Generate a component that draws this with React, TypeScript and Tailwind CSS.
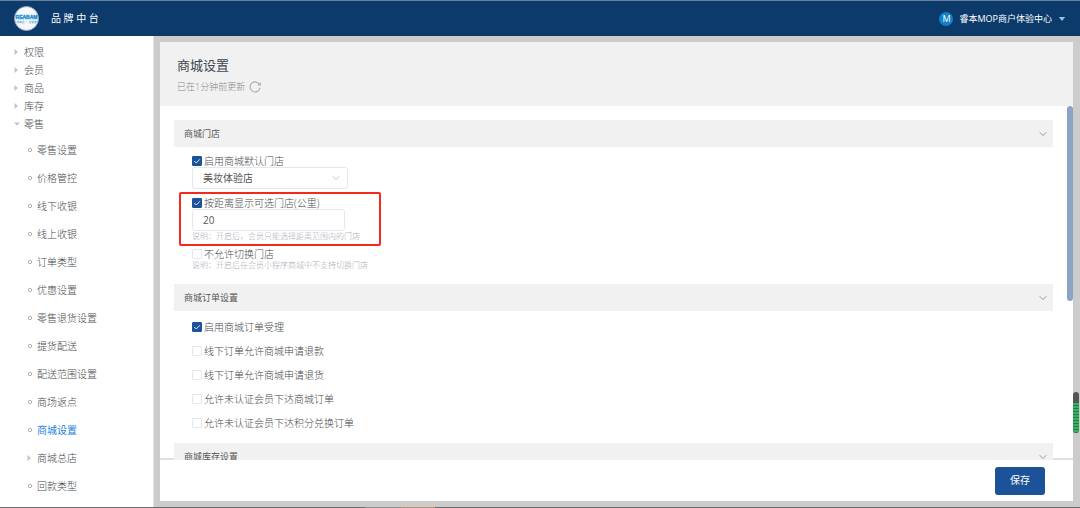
import React, { useState } from "react";

const topMenus = ["权限", "会员", "商品", "库存"];
const retailMenus = [
  "零售设置",
  "价格管控",
  "线下收银",
  "线上收银",
  "订单类型",
  "优惠设置",
  "零售退货设置",
  "提货配送",
  "配送范围设置",
  "商场返点",
  "商城设置",
  "商城总店",
  "回款类型",
];
const orderOptions = [
  { label: "启用商城订单受理", on: true },
  { label: "线下订单允许商城申请退款", on: false },
  { label: "线下订单允许商城申请退货", on: false },
  { label: "允许未认证会员下达商城订单", on: false },
  { label: "允许未认证会员下达积分兑换订单", on: false },
];

function Logo() {
  return (
    <svg viewBox="0 0 50 50" className="size-[25px] shrink-0" role="img" aria-label="REABAM">
      <circle cx="25" cy="25" r="24" fill="#f6f7f8" stroke="#8ea3ba" strokeWidth="2" />
      <text x="25" y="25" textAnchor="middle" fontSize="10" fontWeight="900" fill="#1f93d0" stroke="#1f93d0" strokeWidth="0.8" fontFamily="Liberation Sans, sans-serif">
        REABAM
      </text>
      <text x="25" y="33" textAnchor="middle" fontSize="5.5" fontWeight="700" fill="#58aede" fontFamily="Noto Sans CJK SC, sans-serif">
        睿本云 · 云零售
      </text>
    </svg>
  );
}

function Caret({ open = false }: { open?: boolean }) {
  return (
    <svg viewBox="0 0 6 6" className="size-1.5 shrink-0 fill-[#c0c4cc]" aria-hidden="true">
      {open ? <path d="M0 1.5h6L3 4.8z" /> : <path d="M0.5 0v6L4 3z" />}
    </svg>
  );
}

function Chevron({ className }: { className: string }) {
  return (
    <svg viewBox="0 0 8 8" className={className} fill="none" stroke="currentColor" strokeWidth="1" aria-hidden="true">
      <path d="M0.7 2.2 4 5.6 7.3 2.2" />
    </svg>
  );
}

function Check({ label, on = false }: { label: string; on?: boolean }) {
  return (
    <label className="flex h-3 w-fit items-center gap-0.5 whitespace-nowrap text-[10px] leading-3 text-[#484a4e]">
      <span className="grid size-2.5 shrink-0 place-items-center">
        <input
          type="checkbox"
          defaultChecked={on}
          className="peer col-start-1 row-start-1 size-2.5 appearance-none rounded-[1px] border border-[#e4e7ed] bg-white checked:border-[#1b5298] checked:bg-[#1b5298]"
        />
        <svg viewBox="0 0 10 10" className="pointer-events-none invisible col-start-1 row-start-1 size-2.5 peer-checked:visible" fill="none" stroke="#dfe8f3" strokeWidth="1" aria-hidden="true">
          <path d="M2.3 5 4.3 7 7.8 3.3" />
        </svg>
      </span>
      {label}
    </label>
  );
}

function Note({ children }: { children: React.ReactNode }) {
  return <p className="h-2.5 whitespace-nowrap text-[8px] leading-[10px] text-[#a9adb5]">{children}</p>;
}

function Section({ title, children }: { title: string; children?: React.ReactNode }) {
  return (
    <section>
      <h2>
        <button type="button" className="flex h-[27px] w-full items-center justify-between bg-[#f1f1f1] pr-1.5 pl-2.5 text-[9px] font-normal text-[#555]">
          {title}
          <Chevron className="size-2 text-[#999]" />
        </button>
      </h2>
      {children}
    </section>
  );
}

export default function App() {
  const [active, setActive] = useState("商城设置");
  return (
    <div className="flex h-screen flex-col overflow-hidden bg-[#ccc] font-['Open_Sans','Noto_Sans_CJK_SC',sans-serif] font-light">
      <header className="flex h-9 shrink-0 items-center justify-between border-t border-[#64829f] bg-[#0c3a6a] pr-3.5 pl-3.5 text-white">
        <div className="flex items-center gap-3">
          <Logo />
          <span className="text-[10px] font-normal">品 牌 中 台</span>
        </div>
        <button type="button" className="flex items-center text-[9px] font-normal">
          <span className="mr-1.5 grid size-3.5 place-items-center rounded-full bg-[#0f82c8] text-[9px] leading-none">M</span>
          睿本MOP商户体验中心
          <svg viewBox="0 0 8 5" className="ml-1.5 h-1 w-2 fill-[#8cc4e8]" aria-hidden="true">
            <path d="M0 0h8L4 5z" />
          </svg>
        </button>
      </header>

      <div className="flex min-h-0 flex-1">
        <nav className="w-[154px] shrink-0 overflow-hidden border-r border-[#e4e4e4] bg-white pt-[7px] text-[10px] text-[#484a4e]">
          <ul>
            {topMenus.map((m) => (
              <li key={m}>
                <a href="#" className="flex h-[18px] items-center gap-1 pl-3.5">
                  <Caret />
                  {m}
                </a>
              </li>
            ))}
            <li>
              <a href="#" className="flex h-[18px] items-center gap-1 pl-3.5">
                <Caret open />
                零售
              </a>
              <ul className="pt-[3px]">
                {retailMenus.map((m) => (
                  <li key={m}>
                    <a
                      href="#"
                      onClick={() => setActive(m)}
                      className={"flex h-7 items-center gap-1 pl-[27px] " + (m === active ? "font-normal text-[#1a7fdc]" : "")}
                    >
                      {m === "商城总店" ? (
                        <Caret />
                      ) : (
                        <svg viewBox="0 0 6 6" className="size-1.5 shrink-0" fill="none" stroke="#a9b4c2" aria-hidden="true">
                          <circle cx="3" cy="3" r="1.7" />
                        </svg>
                      )}
                      {m}
                    </a>
                  </li>
                ))}
              </ul>
            </li>
          </ul>
        </nav>

        <main className="mt-1.5 mr-[7px] mb-1.5 ml-1.5 flex min-w-0 flex-1 flex-col bg-white">
          <div className="h-16 shrink-0 bg-[#f1f1f1] pt-3.5 pl-[17px]">
            <h1 className="text-[13px] leading-[18px] font-normal text-[#3c4550]">商城设置</h1>
            <div className="flex items-center gap-1 pt-1 text-[9px] leading-[18px] text-[#888]">
              已在1分钟前更新
              <button type="button" aria-label="刷新">
                <svg viewBox="0 0 12 12" className="size-3" fill="none" stroke="#aaa" strokeWidth="1.1" aria-hidden="true">
                  <path d="M10.5 3.6A5 5 0 1 0 11 6.8" />
                  <path d="M11.2 1.6v2.3H9" />
                </svg>
              </button>
            </div>
          </div>

          <div className="relative min-h-0 flex-1 overflow-hidden">
            <div className="absolute inset-x-0 bottom-0 h-0.5 bg-[#e0e0e0]" />
            <div className="absolute top-0 right-0 h-[195px] w-1.5 rounded-full bg-[#8ba3c4]" />
            <div className="relative mr-5 ml-3.5 pt-3.5">
              <Section title="商城门店">
                <div className="flex flex-col items-start pt-2 pb-3.5 pl-[18px]">
                  <Check label="启用商城默认门店" on />
                  <div className="relative mb-2">
                    <select aria-label="默认门店" className="block h-[22px] w-[156px] appearance-none rounded-[3px] border border-[#e4e7ed] bg-white pl-2.5 text-[10px] font-normal text-[#555]">
                      <option>美妆体验店</option>
                    </select>
                    <Chevron className="pointer-events-none absolute top-[7px] right-2 size-2 text-[#c0c4cc]" />
                  </div>
                  <div className="relative mb-[7px]">
                    <Check label="按距离显示可选门店(公里)" on />
                    <input
                      aria-label="距离(公里)"
                      defaultValue="20"
                      className="block h-[22px] w-[153px] rounded-[3px] border border-[#e4e7ed] bg-white pl-2.5 text-[10px] font-normal text-[#555]"
                    />
                    <Note>说明：开启后，会员只能选择距离范围内的门店</Note>
                    <div className="pointer-events-none absolute -top-[5px] -left-[13px] h-[54px] w-[202px] rounded-[2px] border-2 border-[#f5281c]" />
                  </div>
                  <Check label="不允许切换门店" />
                  <Note>说明：开启后在会员小程序商城中不支持切换门店</Note>
                </div>
              </Section>
              <Section title="商城订单设置">
                <ul className="pt-1 pb-2 pl-[18px]">
                  {orderOptions.map((o) => (
                    <li key={o.label} className="flex h-6 items-center">
                      <Check label={o.label} on={o.on} />
                    </li>
                  ))}
                </ul>
              </Section>
              <Section title="商城库存设置" />
            </div>
          </div>

          <div className="flex h-[41px] shrink-0 items-center justify-end pr-7">
            <button type="button" className="h-7 w-[50px] rounded-[3px] bg-[#1b5298] text-[10px] font-normal text-white">
              保存
            </button>
          </div>
        </main>
      </div>

      <div className="flex h-px shrink-0 bg-[#6b6b6b] pl-[365px]">
        <span className="w-9 bg-[#8c8c8c]" />
        <span className="w-[34px] bg-[#c09068]" />
      </div>

      <div className="fixed top-[392px] right-px w-1.5 overflow-hidden rounded-full bg-[#555] pt-[11px]">
        <div className="h-[30px] bg-[repeating-linear-gradient(#35b060_0_2px,#2b7a48_2px_3px)]" />
      </div>
    </div>
  );
}
